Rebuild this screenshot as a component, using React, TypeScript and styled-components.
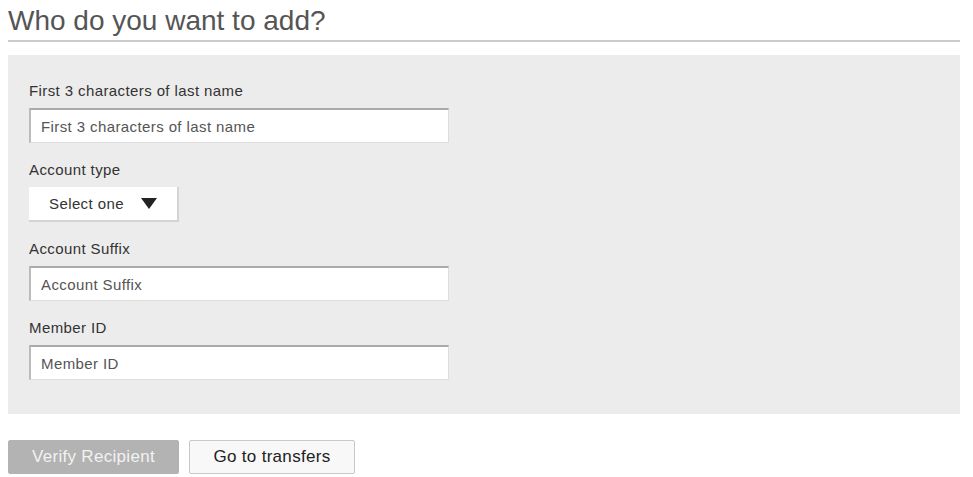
import React from 'react';
import styled, { createGlobalStyle } from 'styled-components';

const GlobalStyle = createGlobalStyle`
  body {
    margin: 0;
    padding: 0 13px 0 8px;
    background: #fff;
    font-family: "Liberation Sans", Arial, sans-serif;
  }
`;

const Page = styled.div`
  width: 952px;
`;

const Title = styled.h1`
  margin: 0;
  padding-top: 4px;
  height: 36px;
  font-size: 28px;
  line-height: 34px;
  font-weight: normal;
  color: #555;
  border-bottom: 2px solid #cacaca;
`;

const Panel = styled.div`
  margin-top: 13px;
  background: #ececec;
  padding: 26px 21px 34px;
  display: flex;
  flex-direction: column;
`;

const Field = styled.div`
  display: flex;
  flex-direction: column;
  align-items: flex-start;
  & + & {
    margin-top: 17px;
  }
`;

const Label = styled.label`
  font-size: 15px;
  line-height: 20px;
  letter-spacing: 0.4px;
  color: #333;
  margin-bottom: 7px;
`;

const TextInput = styled.input`
  box-sizing: border-box;
  width: 420px;
  height: 35px;
  padding: 0 10px;
  background: #fff;
  border-style: solid;
  border-width: 2px 1px 1px 2px;
  border-color: #aaa #ddd #ddd #bbb;
  font-family: inherit;
  font-size: 15px;
  letter-spacing: 0.4px;
  color: #333;
  outline: none;
  &::placeholder {
    color: #555;
  }
`;

const Select = styled.button`
  box-sizing: border-box;
  width: 150px;
  height: 35px;
  padding: 0 20px;
  display: flex;
  align-items: center;
  justify-content: space-between;
  background: #fff;
  border: none;
  border-right: 2px solid #d4d4d4;
  border-bottom: 2px solid #d4d4d4;
  font-family: inherit;
  font-size: 15px;
  letter-spacing: 0.4px;
  color: #333;
`;

const Actions = styled.div`
  display: flex;
  gap: 10px;
  margin-top: 26px;
`;

const Button = styled.button<{ $primary?: boolean }>`
  box-sizing: border-box;
  height: 34px;
  width: ${(p) => (p.$primary ? '171px' : '166px')};
  font-family: inherit;
  font-size: 17px;
  letter-spacing: 0.3px;
  color: ${(p) => (p.$primary ? '#f2f2f2' : '#222')};
  background: ${(p) => (p.$primary ? '#b3b3b3' : '#f8f8f8')};
  border: 1px solid ${(p) => (p.$primary ? '#b3b3b3' : '#c8c8c8')};
  border-radius: 2px;
`;

const Caret = () => (
  <svg width="16" height="11" viewBox="0 0 16 11">
    <polygon points="0,0 16,0 8,11" fill="#222" />
  </svg>
);

const fields = [
  { label: 'First 3 characters of last name' },
  { label: 'Account type', select: true },
  { label: 'Account Suffix' },
  { label: 'Member ID' },
];

export default function App() {
  return (
    <Page>
      <GlobalStyle />
      <Title>Who do you want to add?</Title>
      <Panel>
        {fields.map((f) => (
          <Field key={f.label}>
            <Label>{f.label}</Label>
            {f.select ? (
              <Select type="button">
                Select one <Caret />
              </Select>
            ) : (
              <TextInput placeholder={f.label} />
            )}
          </Field>
        ))}
      </Panel>
      <Actions>
        <Button $primary>Verify Recipient</Button>
        <Button>Go to transfers</Button>
      </Actions>
    </Page>
  );
}
